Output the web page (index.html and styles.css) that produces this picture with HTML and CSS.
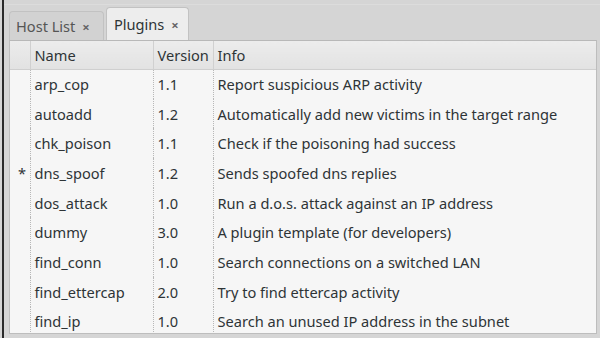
FILE: index.html
```html
<!DOCTYPE html>
<html>
<head>
<meta charset="utf-8">
<link rel="stylesheet" href="styles.css">
</head>
<body>
<div class="frame">
  <div class="edge"></div>
  <div class="main">
    <div class="tabbar">
      <div class="tab">Host List <span class="x">×</span></div>
      <div class="tab active">Plugins <span class="x">×</span></div>
    </div>
    <div class="panel">
      <table class="list">
        <thead>
          <tr><th class="mk"></th><th class="nm">Name</th><th class="vr">Version</th><th class="inf">Info</th></tr>
        </thead>
        <tbody>
          <tr><td class="mk"></td><td>arp_cop</td><td>1.1</td><td>Report suspicious ARP activity</td></tr>
          <tr><td class="mk"></td><td>autoadd</td><td>1.2</td><td>Automatically add new victims in the target range</td></tr>
          <tr><td class="mk"></td><td>chk_poison</td><td>1.1</td><td>Check if the poisoning had success</td></tr>
          <tr><td class="mk">*</td><td>dns_spoof</td><td>1.2</td><td>Sends spoofed dns replies</td></tr>
          <tr><td class="mk"></td><td>dos_attack</td><td>1.0</td><td>Run a d.o.s. attack against an IP address</td></tr>
          <tr><td class="mk"></td><td>dummy</td><td>3.0</td><td>A plugin template (for developers)</td></tr>
          <tr><td class="mk"></td><td>find_conn</td><td>1.0</td><td>Search connections on a switched LAN</td></tr>
          <tr><td class="mk"></td><td>find_ettercap</td><td>2.0</td><td>Try to find ettercap activity</td></tr>
          <tr><td class="mk"></td><td>find_ip</td><td>1.0</td><td>Search an unused IP address in the subnet</td></tr>
        </tbody>
      </table>
    </div>
  </div>
</div>
</body>
</html>
```
FILE: styles.css
```css
html, body {
  margin: 0;
  padding: 0;
  width: 600px;
  height: 338px;
  overflow: hidden;
  background: #d4d4d4;
  font-family: "Noto Sans", "Open Sans", sans-serif;
  font-size: 14.6px;
  color: #2e3436;
}
.frame {
  display: flex;
  height: 338px;
  background: #d5d5d5;
}
.edge {
  width: 2px;
  margin-left: 2px;
  background: #2a2a2a;
  flex: none;
}
.main {
  flex: 1;
  display: flex;
  flex-direction: column;
  padding: 0 3px 4px 5px;
  border-top: 1px solid #dcdcdc;
  margin-top: 4px;
  min-width: 0;
  min-height: 0;
}
.tabbar {
  display: flex;
  align-items: flex-end;
  height: 35px;
  flex: none;
  gap: 2px;
}
.tab {
  height: 29px;
  line-height: 29px;
  padding: 0 0 0 6px;
  background: #d2d2d2;
  border: 1px solid #c2c2c2;
  border-bottom: none;
  border-radius: 4px 4px 0 0;
  color: #555;
  box-sizing: border-box;
  width: 95px;
  white-space: nowrap;
}
.tab.active {
  height: 33px;
  line-height: 32px;
  background: #ededed;
  color: #2e3436;
  width: 83px;
  padding-left: 7px;
}
.x {
  font-size: 13px;
  margin-left: 3px;
  font-weight: bold;
  color: #666;
}
.panel {
  flex: 1;
  min-height: 0;
  background: #f6f6f6;
  border: 1px solid #bdbdbd;
  border-top: 1px solid #b8b8b8;
  overflow: hidden;
}
.list {
  border-collapse: collapse;
  width: 100%;
}
.list th {
  height: 28px;
  text-align: left;
  font-weight: normal;
  background: linear-gradient(#ececec, #e2e2e2);
  border-right: 1px solid #d0d0d0;
  border-bottom: 1px solid #cfcfcf;
  padding: 0 0 0 4px;
  box-sizing: border-box;
}
.list th.inf { border-right: none; }
.list td {
  height: 29.7px;
  padding: 0 0 0 4px;
  border-right: 1px dotted #b8b8b8;
  white-space: nowrap;
  box-sizing: border-box;
}
.list td:last-child { border-right: none; }
.list .mk { width: 20px; padding-left: 8px; }
.list .nm { width: 123px; }
.list .vr { width: 60px; }
```
